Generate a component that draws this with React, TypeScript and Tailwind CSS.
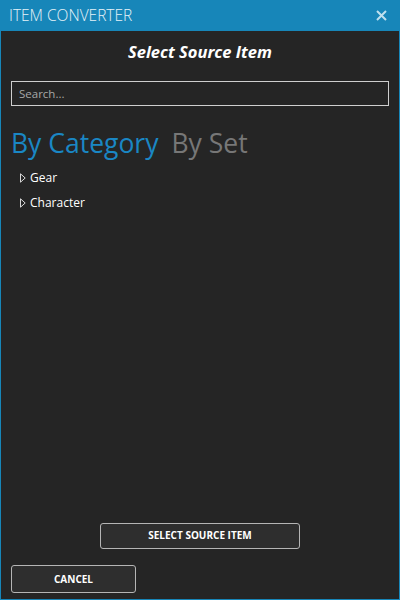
import { useState } from 'react';

const treeItems = ['Gear', 'Character'];

function Caret() {
  return (
    <svg width="6" height="10" viewBox="0 0 6 10" className="shrink-0">
      <path d="M0.5 0.8 L5.2 5 L0.5 9.2 Z" fill="none" stroke="#d8d8d8" strokeWidth="1" />
    </svg>
  );
}

export default function App() {
  const [tab, setTab] = useState<'category' | 'set'>('category');
  const [query, setQuery] = useState('');

  return (
    <div
      className="w-[400px] h-[600px] bg-[#1786b9] flex flex-col overflow-hidden"
      style={{ fontFamily: '"Open Sans", "Noto Sans", sans-serif' }}
    >
      {/* Title bar */}
      <div className="h-[31px] shrink-0 flex items-center justify-between pl-[9px] pr-[13px]">
        <span className="text-[15.5px] font-light text-[#e6f2f8]">ITEM CONVERTER</span>
        <svg width="11" height="11" viewBox="0 0 11 11">
          <path d="M1 1 L10 10 M10 1 L1 10" stroke="#bfe0ee" strokeWidth="2" />
        </svg>
      </div>

      {/* Body */}
      <div className="flex-1 mx-px mb-px bg-[#252525] flex flex-col px-[10px]">
        <h1 className="text-center text-white text-[16.5px] font-bold italic mt-[11px] leading-5">
          Select Source Item
        </h1>

        <input
          value={query}
          onChange={(e) => setQuery(e.target.value)}
          placeholder="Search..."
          className="mt-[19px] h-[25px] w-full bg-transparent border border-[#cfcfcf] px-[7px] text-[11.5px] text-white placeholder:text-[#a8a8a8] outline-none"
        />

        <div className="flex gap-[13px] mt-[19px] text-[26.5px] leading-[36px]">
          <button
            onClick={() => setTab('category')}
            className={tab === 'category' ? 'text-[#1a87c4]' : 'text-[#777777]'}
          >
            By Category
          </button>
          <button
            onClick={() => setTab('set')}
            className={tab === 'set' ? 'text-[#1a87c4]' : 'text-[#777777]'}
          >
            By Set
          </button>
        </div>

        <ul className="mt-[4px] pl-[9px] flex flex-col">
          {treeItems.map((item) => (
            <li key={item} className="flex items-center gap-[4px] h-[25px] text-[12px] text-white">
              <Caret />
              <span>{item}</span>
            </li>
          ))}
        </ul>

        <div className="flex-1" />

        <div className="flex justify-center">
          <button className="w-[200px] h-[26px] rounded-[3px] border border-[#b5b5b5] bg-[#2e2e2e] text-white text-[10px] font-bold">
            SELECT SOURCE ITEM
          </button>
        </div>

        <div className="mt-[16px] mb-[6px]">
          <button className="w-[125px] h-[28px] rounded-[3px] border border-[#b5b5b5] bg-[#2e2e2e] text-white text-[10px] font-bold">
            CANCEL
          </button>
        </div>
      </div>
    </div>
  );
}
